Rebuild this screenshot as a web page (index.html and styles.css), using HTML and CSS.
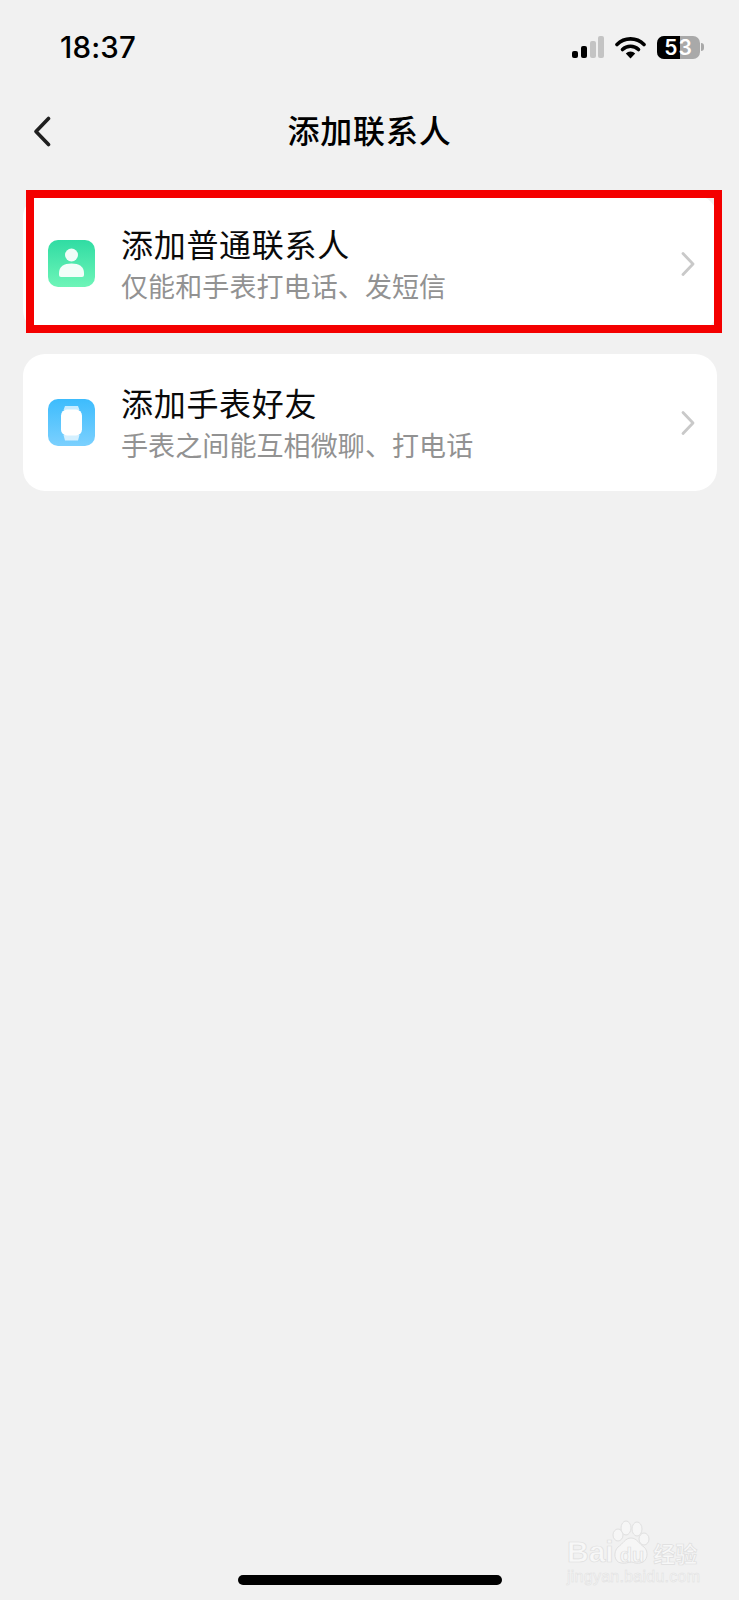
FILE: index.html
```html
<!DOCTYPE html>
<html lang="zh">
<head>
<meta charset="utf-8">
<title>添加联系人</title>
<link rel="stylesheet" href="styles.css">
</head>
<body>
<div class="page">
  <header class="status">
    <span class="time">18:37</span>
    <div class="status-icons">
      <svg class="signal" width="32" height="24" viewBox="0 0 32 24">
        <rect x="0" y="16" width="6" height="7" rx="2" fill="#000"/>
        <rect x="9" y="11" width="6" height="12" rx="2" fill="#000"/>
        <rect x="18" y="6" width="6" height="17" rx="2" fill="#c4c4c4"/>
        <rect x="26" y="1" width="6" height="22" rx="2" fill="#c4c4c4"/>
      </svg>
      <svg class="wifi" width="31" height="23" viewBox="0 0 31 23">
        <path d="M2 8.500 A19 19 0 0 1 29 8.500" fill="none" stroke="#000" stroke-width="3.600" stroke-linecap="round"/>
        <path d="M7.500 13.500 A11.500 11.500 0 0 1 23.500 13.500" fill="none" stroke="#000" stroke-width="3.600" stroke-linecap="round"/>
        <path d="M15.500 22.500 L10.800 17.500 A6.500 6.500 0 0 1 20.200 17.500 Z" fill="#000"/>
      </svg>
      <div class="battery">
        <div class="battery-body"><span class="battery-fill"></span><span class="battery-num">53</span></div>
        <span class="battery-tip"></span>
      </div>
    </div>
  </header>

  <nav class="nav">
    <svg class="back" width="20" height="32" viewBox="0 0 20 32">
      <path d="M16.500 2.500 L4 15.500 L16.500 28.500" fill="none" stroke="#1f1f1f" stroke-width="3.600" stroke-linecap="round" stroke-linejoin="round"/>
    </svg>
    <h1 class="title">添加联系人</h1>
  </nav>

  <main class="list">
    <section class="card">
      <div class="icon icon-green">
        <svg width="47" height="47" viewBox="0 0 47 47">
          <circle cx="23.500" cy="15" r="6.500" fill="#fff" opacity="0.92"/>
          <path d="M11 35 V33 C11 26.500 16 23.500 23.500 23.500 C31 23.500 36 26.500 36 33 V35 A2 2 0 0 1 34 37 H13 A2 2 0 0 1 11 35 Z" fill="#fff" opacity="0.92"/>
        </svg>
      </div>
      <div class="text">
        <div class="card-title">添加普通联系人</div>
        <div class="card-sub">仅能和手表打电话、发短信</div>
      </div>
      <svg class="chev" width="14" height="26" viewBox="0 0 14 26">
        <path d="M2 2.500 L12 13 L2 23.500" fill="none" stroke="#c9c9c9" stroke-width="2.800" stroke-linecap="round" stroke-linejoin="round"/>
      </svg>
    </section>
    <section class="card">
      <div class="icon icon-blue">
        <svg width="47" height="47" viewBox="0 0 47 47">
          <path d="M17 7 H30 L31.500 11 H15.500 Z M15.500 36 H31.500 L30 41.500 H17 Z" fill="#fff" opacity="0.7"/>
          <rect x="13" y="10.500" width="21" height="26" rx="6" fill="#fff"/>
        </svg>
      </div>
      <div class="text">
        <div class="card-title">添加手表好友</div>
        <div class="card-sub">手表之间能互相微聊、打电话</div>
      </div>
      <svg class="chev" width="14" height="26" viewBox="0 0 14 26">
        <path d="M2 2.500 L12 13 L2 23.500" fill="none" stroke="#c9c9c9" stroke-width="2.800" stroke-linecap="round" stroke-linejoin="round"/>
      </svg>
    </section>
  </main>

  <div class="highlight"></div>

  <div class="home-bar"></div>

  <div class="watermark">
    <svg class="paw" width="40" height="46" viewBox="0 0 40 46">
      <g fill="#f6f6f6" stroke="#e0e0e0" stroke-width="1">
        <ellipse cx="7" cy="15" rx="5" ry="6"/>
        <ellipse cx="15" cy="8" rx="5" ry="7"/>
        <ellipse cx="26" cy="9" rx="5" ry="7"/>
        <ellipse cx="33" cy="19" rx="5" ry="6"/>
        <path d="M20 18 C26 18 28 24 33 27 C38 31 37 42 29 43 C24 44 23 42 20 42 C17 42 15 44 10 43 C3 42 2 32 7 27 C12 24 14 18 20 18 Z"/>
      </g>
    </svg>
    <div class="wm-main"><span class="wm-bai">Bai</span><span class="wm-du">du</span><span class="wm-cn">经验</span></div>
    <div class="wm-url">jingyan.baidu.com</div>
  </div>
</div>
</body>
</html>
```

FILE: styles.css
```css
* {
  box-sizing: border-box;
}

html,
body {
  margin: 0;
  padding: 0;
}

body {
  background: #f1f1f1;
  font-family: "Noto Sans CJK SC", "Liberation Sans", sans-serif;
}

.page {
  position: relative;
  width: 739px;
  height: 1600px;
  display: flex;
  flex-direction: column;
  background: #f1f1f1;
  overflow: hidden;
}

.status {
  height: 96px;
  flex: none;
  display: flex;
  align-items: flex-start;
  justify-content: space-between;
  padding: 30px 35px 0 60px;
}

.time {
  font-family: Inter, "Liberation Sans", sans-serif;
  font-size: 29.500px;
  line-height: 34px;
  font-weight: 500;
  color: #000;
  letter-spacing: 0.2px;
}

.status-icons {
  display: flex;
  align-items: center;
  padding-top: 5px;
}

.signal {
  margin-right: 11px;
}

.wifi {
  margin-right: 11px;
}

.battery {
  display: flex;
  align-items: center;
  gap: 1px;
}

.battery-body {
  position: relative;
  width: 43px;
  height: 23px;
  border-radius: 7px;
  background: #a9a9a9;
  overflow: hidden;
  display: flex;
  align-items: center;
  justify-content: center;
}

.battery-fill {
  position: absolute;
  left: 0;
  top: 0;
  bottom: 0;
  width: 23px;
  background: #000;
}

.battery-num {
  position: relative;
  font-family: Inter, "Liberation Sans", sans-serif;
  font-size: 21px;
  line-height: 23px;
  font-weight: 600;
  color: #fff;
  letter-spacing: 1px;
}

.battery-tip {
  width: 3px;
  height: 8px;
  border-radius: 0 3px 3px 0;
  background: #a9a9a9;
}

.nav {
  position: relative;
  height: 70px;
  flex: none;
  display: flex;
  align-items: center;
  justify-content: center;
  padding-bottom: 4px;
}

.back {
  position: absolute;
  left: 32px;
  top: 20px;
}

.title {
  margin: 0;
  font-size: 32px;
  line-height: 44px;
  font-weight: 500;
  color: #000;
  letter-spacing: 0.8px;
}

.list {
  display: flex;
  flex-direction: column;
  gap: 22px;
  padding: 29px 22px 0 23px;
}

.card {
  height: 137px;
  display: flex;
  align-items: center;
  gap: 26px;
  padding: 0 22px 0 25px;
  border-radius: 22px;
  background: #fff;
}

.icon {
  width: 47px;
  height: 47px;
  flex: none;
  border-radius: 10px;
  overflow: hidden;
}

.icon svg {
  display: block;
}

.icon-green {
  background: linear-gradient(180deg, #30dca3, #6ef5b8);
}

.icon-blue {
  background: linear-gradient(180deg, #3dbcfd, #7bd0fe);
}

.text {
  flex: 1;
  min-width: 0;
  display: flex;
  flex-direction: column;
  gap: 2px;
  padding-bottom: 2px;
}

.card-title {
  font-size: 32px;
  line-height: 44px;
  color: #0a0a0a;
  letter-spacing: 0.7px;
}

.card-sub {
  font-size: 27px;
  line-height: 38px;
  color: #929292;
  letter-spacing: 0.1px;
}

.chev {
  flex: none;
}

.highlight {
  position: absolute;
  left: 26px;
  top: 190px;
  width: 696px;
  height: 143px;
  border: 8px solid #f40000;
}

.home-bar {
  position: absolute;
  left: 238px;
  top: 1575px;
  width: 264px;
  height: 10px;
  border-radius: 5px;
  background: #000;
}

.watermark {
  position: absolute;
  left: 567px;
  top: 1518px;
  width: 140px;
  height: 70px;
  color: #f7f7f7;
}

.paw {
  position: absolute;
  left: 44px;
  top: 2px;
}

.wm-main {
  position: absolute;
  left: 0;
  top: 15px;
  display: flex;
  align-items: baseline;
  white-space: nowrap;
  font-family: "Liberation Sans", sans-serif;
  font-weight: 700;
  -webkit-text-stroke: 0.7px #dedede;
}

.wm-bai {
  font-size: 30px;
  line-height: 38px;
}

.wm-du {
  font-size: 20px;
  line-height: 38px;
  margin-left: 6px;
}

.wm-cn {
  font-family: "Noto Sans CJK SC", sans-serif;
  font-size: 22px;
  line-height: 38px;
  margin-left: 9px;
}

.wm-url {
  position: absolute;
  left: 0;
  top: 50px;
  font-family: "Liberation Sans", sans-serif;
  font-size: 16px;
  line-height: 18px;
  letter-spacing: 0.25px;
  white-space: nowrap;
  -webkit-text-stroke: 0.5px #e0e0e0;
}
```
